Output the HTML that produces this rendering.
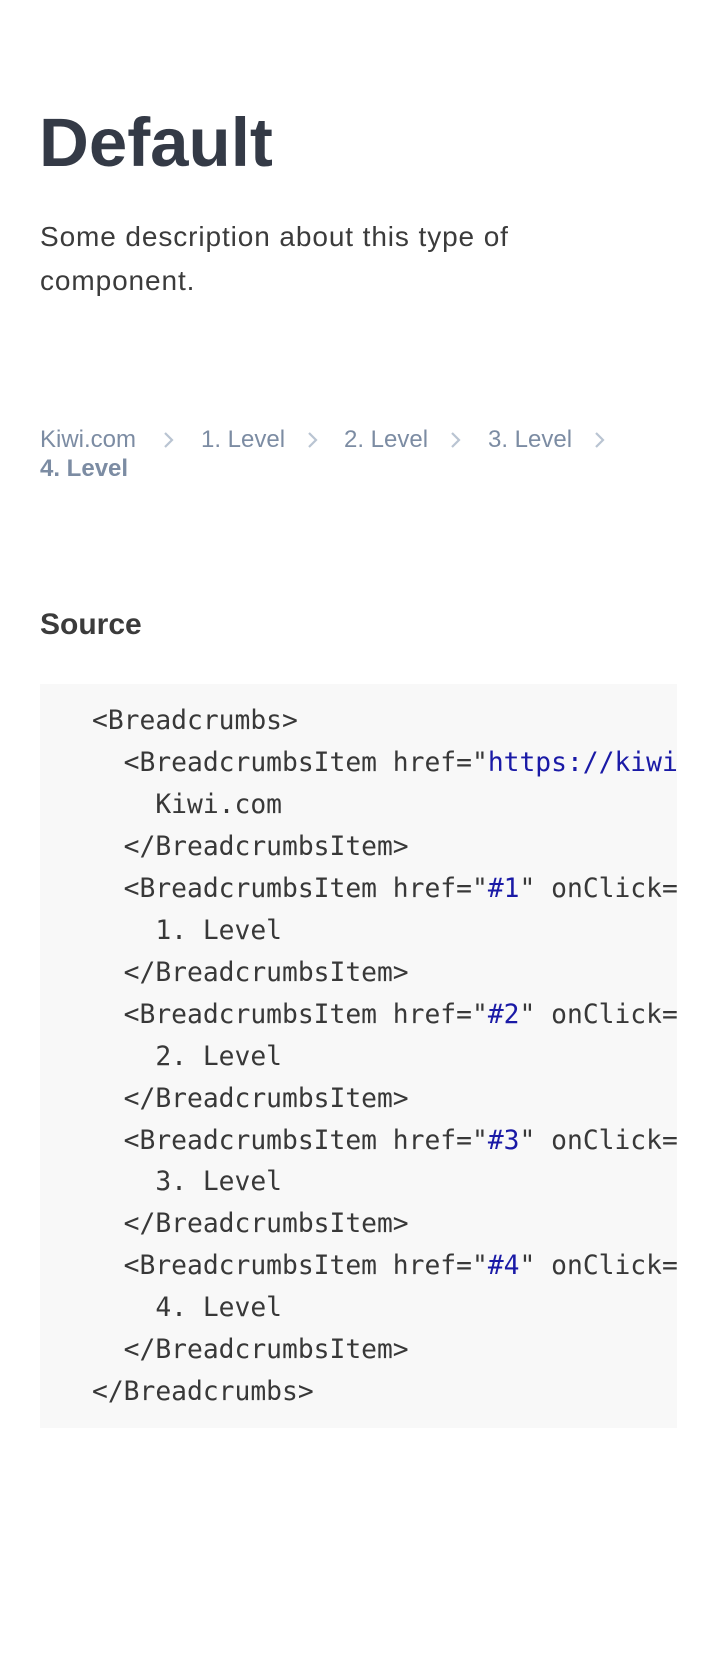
<!DOCTYPE html>
<html><head><meta charset="utf-8"><style>
body{margin:0;background:#fff;width:718px;height:1671px;overflow:hidden;font-family:"Liberation Sans",sans-serif;}
h1{position:absolute;left:39px;top:103px;margin:0;font-size:69px;font-weight:bold;color:#343a46;line-height:80px;}
.desc{position:absolute;left:40px;top:215px;width:560px;font-size:28px;letter-spacing:0.9px;line-height:44px;color:#3b3b3b;margin:0;}
.bc{position:absolute;top:425px;font-size:24px;color:#7c8ca3;line-height:30px;}
.ch{position:absolute;top:429px;}
.src{position:absolute;left:40px;top:608px;font-size:30px;font-weight:bold;color:#3b3b3b;}
pre{position:absolute;left:40px;top:684px;width:637px;height:744px;margin:0;background:#f8f8f8;overflow:hidden;box-sizing:border-box;padding:17px 0 0 52px;font-family:"DejaVu Sans Mono","Liberation Mono",monospace;font-size:26.3px;line-height:41.95px;color:#383838;white-space:pre;}
.b{color:#1a1aa6;}
</style></head><body>
<h1>Default</h1>
<p class="desc">Some description about this type of component.</p>
<div class="bc" style="left:40px">Kiwi.com</div>
<svg class="ch" style="left:160px" width="16" height="22" viewBox="0 0 16 22"><path d="M5 4l7 7-7 7" fill="none" stroke="#b9c4d2" stroke-width="2.2"/></svg>
<div class="bc" style="left:201px">1. Level</div>
<svg class="ch" style="left:304px" width="16" height="22" viewBox="0 0 16 22"><path d="M5 4l7 7-7 7" fill="none" stroke="#b9c4d2" stroke-width="2.2"/></svg>
<div class="bc" style="left:344px">2. Level</div>
<svg class="ch" style="left:447px" width="16" height="22" viewBox="0 0 16 22"><path d="M5 4l7 7-7 7" fill="none" stroke="#b9c4d2" stroke-width="2.2"/></svg>
<div class="bc" style="left:488px">3. Level</div>
<svg class="ch" style="left:591px" width="16" height="22" viewBox="0 0 16 22"><path d="M5 4l7 7-7 7" fill="none" stroke="#b9c4d2" stroke-width="2.2"/></svg>
<div class="bc" style="left:40px;top:454px;font-weight:bold">4. Level</div>
<div class="src">Source</div>
<pre>&lt;Breadcrumbs&gt;
  &lt;BreadcrumbsItem href="<span class="b">https://kiwi.com</span>" onClick={}&gt;
    Kiwi.com
  &lt;/BreadcrumbsItem&gt;
  &lt;BreadcrumbsItem href="<span class="b">#1</span>" onClick={}&gt;
    1. Level
  &lt;/BreadcrumbsItem&gt;
  &lt;BreadcrumbsItem href="<span class="b">#2</span>" onClick={}&gt;
    2. Level
  &lt;/BreadcrumbsItem&gt;
  &lt;BreadcrumbsItem href="<span class="b">#3</span>" onClick={}&gt;
    3. Level
  &lt;/BreadcrumbsItem&gt;
  &lt;BreadcrumbsItem href="<span class="b">#4</span>" onClick={}&gt;
    4. Level
  &lt;/BreadcrumbsItem&gt;
&lt;/Breadcrumbs&gt;</pre>
</body></html>
